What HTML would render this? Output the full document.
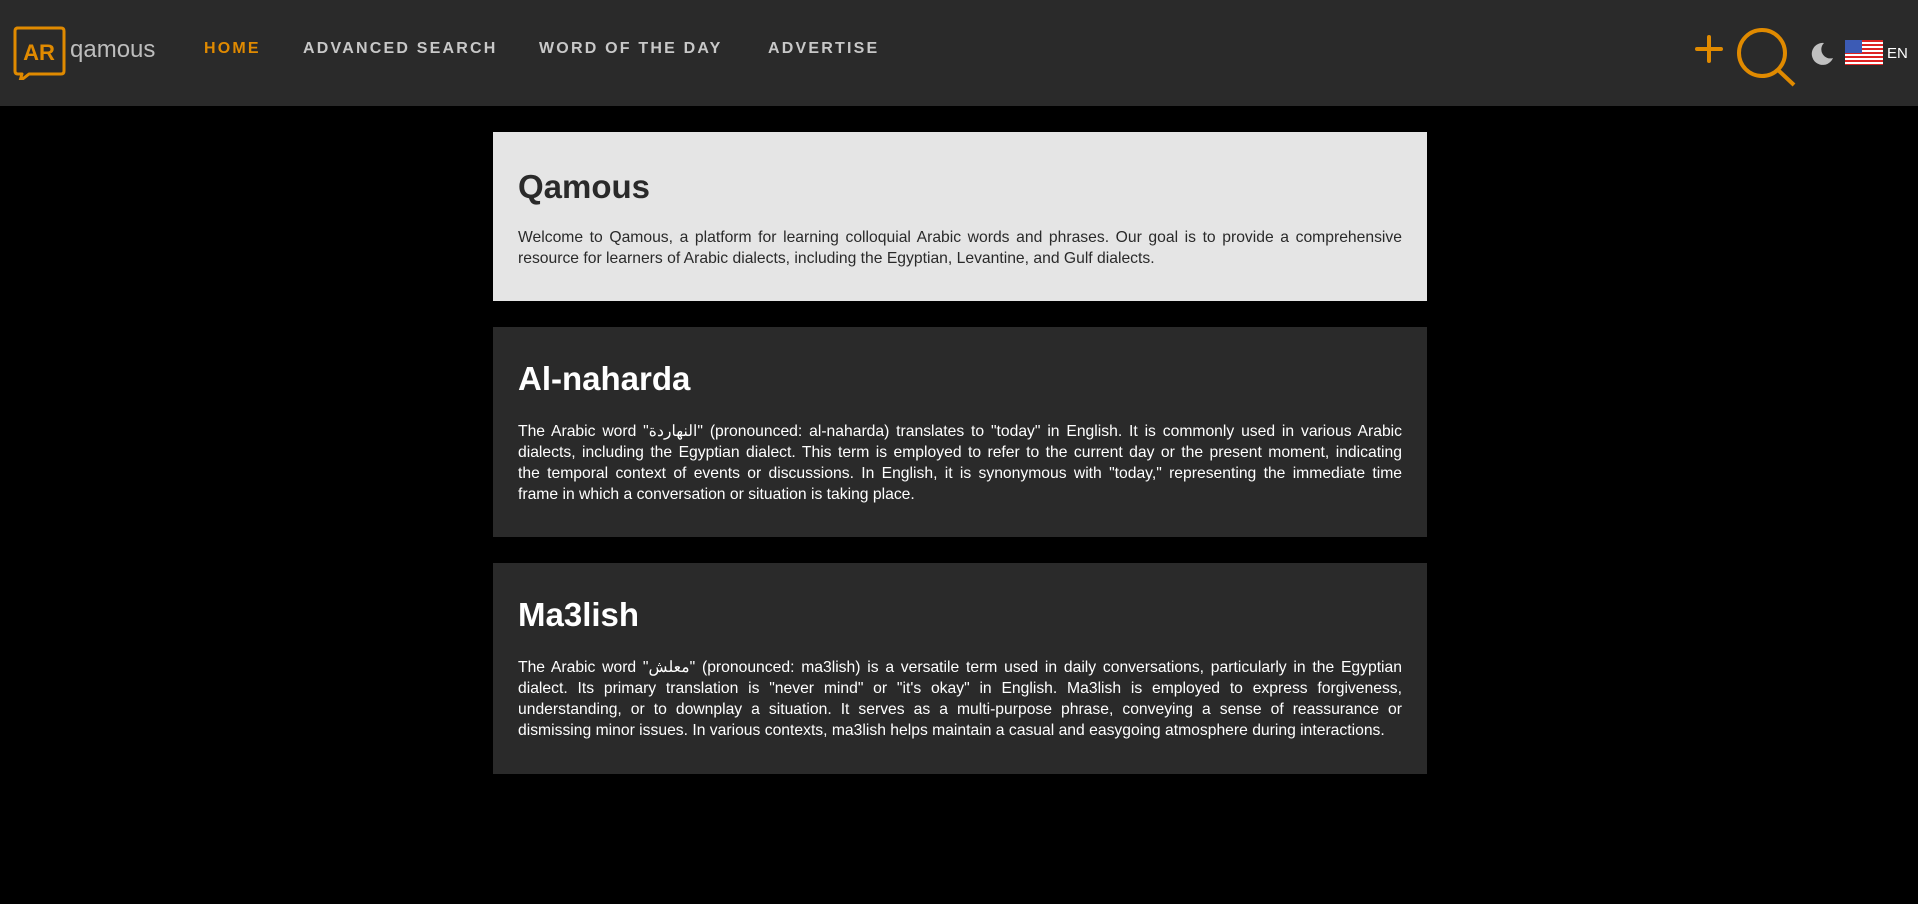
<!DOCTYPE html>
<html><head><meta charset="utf-8"><style>
*{margin:0;padding:0;box-sizing:border-box}
body{width:1918px;height:904px;background:#000;font-family:"Liberation Sans","Noto Sans CJK SC",sans-serif;overflow:hidden;position:relative}
.hdr{position:absolute;left:0;top:0;width:1918px;height:106px;background:#2a2a2a}
.nav a{position:absolute;top:40px;font-size:16px;font-weight:bold;letter-spacing:2.2px;color:#c8c8c8;text-decoration:none}
.card{position:absolute;left:493px;width:934px;padding:0 25px}
.card h1{font-size:33px;font-weight:bold}
.card p{font-size:15.7px;line-height:21px}
.card p span{display:block;white-space:nowrap;text-align:justify;text-align-last:justify}
.card p span.l{text-align-last:left}
.light{background:#e5e5e5;color:#2a2a2a}
.dark{background:#2a2a2a;color:#fff}
</style></head><body>
<div class="hdr">
<svg style="position:absolute;left:13px;top:26px" width="56" height="54" viewBox="0 0 56 54">
<path d="M4 2 H48 Q51 2 51 5 V45 Q51 48 48 48 H16 L7 55 L9 48 H5 Q2 48 2 45 V5 Q2 2 5 2 Z" fill="none" stroke="#e08a00" stroke-width="3" stroke-linejoin="round"/>
<text x="26" y="34" text-anchor="middle" font-family="Liberation Sans" font-weight="bold" font-size="22" fill="#e08a00">AR</text>
</svg>
<div style="position:absolute;left:70px;top:36px;font-size:24px;color:#bdbdbd">qamous</div>
<div class="nav">
<a style="left:204px;color:#e08a00">HOME</a>
<a style="left:303px">ADVANCED SEARCH</a>
<a style="left:539px">WORD OF THE DAY</a>
<a style="left:768px">ADVERTISE</a>
</div>
<svg style="position:absolute;left:1690px;top:20px" width="120" height="70">
<path d="M7 29 H31 M19 17 V41" stroke="#e08a00" stroke-width="4" stroke-linecap="round"/>
<circle cx="72" cy="33" r="23" fill="none" stroke="#e08a00" stroke-width="4"/>
<path d="M88 50 L104 65" stroke="#e08a00" stroke-width="4"/>
</svg>
<svg style="position:absolute;left:1810px;top:40px" width="24" height="26" viewBox="0 0 24 26">
<path d="M14 3 A11 11 0 1 0 23 18 A9 9 0 0 1 14 3 Z" fill="#c0c0c0"/>
</svg>
<svg style="position:absolute;left:1845px;top:40px" width="38" height="25" viewBox="0 0 38 25">
<rect width="38" height="25" fill="#fff"/>
<g fill="#d22">
<rect y="0" width="38" height="2"/><rect y="4" width="38" height="2"/><rect y="8" width="38" height="2"/><rect y="12" width="38" height="2"/><rect y="16" width="38" height="2"/><rect y="20" width="38" height="2"/><rect y="24" width="38" height="1"/>
</g>
<rect width="17" height="13" fill="#3c5bb5"/>
</svg>
<div style="position:absolute;left:1887px;top:45px;font-size:15px;color:#fff">EN</div>
</div>

<div class="card light" style="top:132px;height:169px">
<h1 style="padding-top:36px">Qamous</h1>
<p style="margin-top:21px"><span>Welcome to Qamous, a platform for learning colloquial Arabic words and phrases. Our goal is to provide a comprehensive</span><span class="l">resource for learners of Arabic dialects, including the Egyptian, Levantine, and Gulf dialects.</span></p>
</div>

<div class="card dark" style="top:327px;height:210px">
<h1 style="padding-top:33px">Al-naharda</h1>
<p style="margin-top:23px"><span>The Arabic word "النهاردة" (pronounced: al-naharda) translates to "today" in English. It is commonly used in various Arabic</span><span>dialects, including the Egyptian dialect. This term is employed to refer to the current day or the present moment, indicating</span><span>the temporal context of events or discussions. In English, it is synonymous with "today," representing the immediate time</span><span class="l">frame in which a conversation or situation is taking place.</span></p>
</div>

<div class="card dark" style="top:563px;height:211px">
<h1 style="padding-top:33px">Ma3lish</h1>
<p style="margin-top:23px"><span>The Arabic word "معلش" (pronounced: ma3lish) is a versatile term used in daily conversations, particularly in the Egyptian</span><span>dialect. Its primary translation is "never mind" or "it's okay" in English. Ma3lish is employed to express forgiveness,</span><span>understanding, or to downplay a situation. It serves as a multi-purpose phrase, conveying a sense of reassurance or</span><span class="l">dismissing minor issues. In various contexts, ma3lish helps maintain a casual and easygoing atmosphere during interactions.</span></p>
</div>
</body></html>
